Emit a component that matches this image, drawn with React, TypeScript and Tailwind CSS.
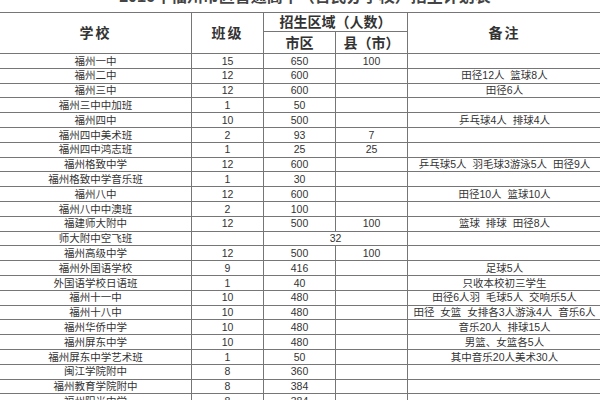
const ROWS: [string, string, string, string, string][] = [
  ["福州一中", "15", "650", "100", ""],
  ["福州二中", "12", "600", "", "田径12人  篮球8人"],
  ["福州三中", "12", "600", "", "田径6人"],
  ["福州三中中加班", "1", "50", "", ""],
  ["福州四中", "10", "500", "", "乒乓球4人  排球4人"],
  ["福州四中美术班", "2", "93", "7", ""],
  ["福州四中鸿志班", "1", "25", "25", ""],
  ["福州格致中学", "12", "600", "", "乒乓球5人  羽毛球3游泳5人  田径9人"],
  ["福州格致中学音乐班", "1", "30", "", ""],
  ["福州八中", "12", "600", "", "田径10人  篮球10人"],
  ["福州八中中澳班", "2", "100", "", ""],
  ["福建师大附中", "12", "500", "100", "篮球  排球  田径8人"],
  ["师大附中空飞班", "", "32", "*", ""],
  ["福州高级中学", "12", "500", "100", ""],
  ["福州外国语学校", "9", "416", "", "足球5人"],
  ["外国语学校日语班", "1", "40", "", "只收本校初三学生"],
  ["福州十一中", "10", "480", "", "田径6人羽  毛球5人  交响乐5人"],
  ["福州十八中", "10", "480", "", "田径  女篮  女排各3人游泳4人  音乐6人"],
  ["福州华侨中学", "10", "480", "", "音乐20人  排球15人"],
  ["福州屏东中学", "10", "480", "", "男篮、女篮各5人"],
  ["福州屏东中学艺术班", "1", "50", "", "其中音乐20人美术30人"],
  ["闽江学院附中", "8", "360", "", ""],
  ["福州教育学院附中", "8", "384", "", ""],
  ["福州阳光中学", "8", "384", "", ""],
];

const cell = "border-[1.5px] border-[#767676] text-center whitespace-pre p-0 leading-none";

export default function App() {
  return (
    <div
      className="w-[600px] h-[400px] overflow-hidden bg-white text-[#333]"
      style={{ fontFamily: '"Liberation Sans", "Noto Sans CJK SC", sans-serif' }}
    >
      <div className="h-[12px] overflow-hidden">
        <p className="-mt-[12px] text-center text-[16px] font-bold text-[#444] leading-[18px] pl-[10px]">
          2016年福州市区普通高中（含民办学校）招生计划表
        </p>
      </div>
      <table className="border-collapse table-fixed w-[602px] -ml-[1px]">
        <colgroup>
          <col className="w-[192px]" />
          <col className="w-[72px]" />
          <col className="w-[72px]" />
          <col className="w-[72px]" />
          <col className="w-[194px]" />
        </colgroup>
        <thead className="text-[14px] font-bold text-[#333]">
          <tr className="h-[19px]">
            <th rowSpan={2} className={`${cell} tracking-[2px]`}>学校</th>
            <th rowSpan={2} className={`${cell} tracking-[2px]`}>班级</th>
            <th colSpan={2} className={cell}>招生区域（人数）</th>
            <th rowSpan={2} className={`${cell} tracking-[2px]`}>备注</th>
          </tr>
          <tr className="h-[22px]">
            <th className={cell}>市区</th>
            <th className={cell}>县（市）</th>
          </tr>
        </thead>
        <tbody className="text-[10.5px]">
          {ROWS.map((r, i) => (
            <tr key={i} className="h-[14.8px]">
              <td className={cell}>{r[0]}</td>
              <td className={cell}>{r[1]}</td>
              {r[3] === "*" ? (
                <td colSpan={2} className={cell}>{r[2]}</td>
              ) : (
                <>
                  <td className={cell}>{r[2]}</td>
                  <td className={cell}>{r[3]}</td>
                </>
              )}
              <td className={cell}>{r[4]}</td>
            </tr>
          ))}
        </tbody>
      </table>
    </div>
  );
}
